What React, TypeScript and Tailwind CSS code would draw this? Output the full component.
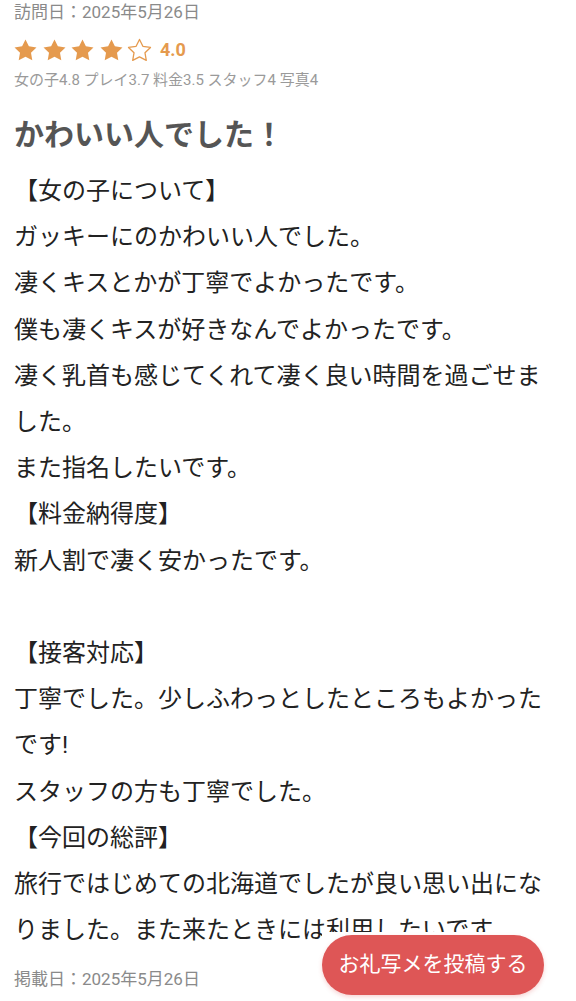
import React from "react";

const FONT = 'Roboto, "Noto Sans CJK JP", "Noto Sans", sans-serif';

function Star({ filled }: { filled: boolean }) {
  return (
    <svg width="25" height="25" viewBox="0 0 24 24" className="shrink-0">
      <path
        d="M12 1.4l3.25 6.6 7.3 1.05-5.28 5.15 1.25 7.27L12 18.05l-6.52 3.42 1.25-7.27-5.28-5.15 7.3-1.05L12 1.4z"
        fill={filled ? "#e59a4e" : "none"}
        stroke="#e59a4e"
        strokeWidth={filled ? 0 : 1.25}
        strokeLinejoin="round"
      />
    </svg>
  );
}

const body = `【女の子について】
ガッキーにのかわいい人でした。
凄くキスとかが丁寧でよかったです。
僕も凄くキスが好きなんでよかったです。
凄く乳首も感じてくれて凄く良い時間を過ごせました。
また指名したいです。
【料金納得度】
新人割で凄く安かったです。

【接客対応】
丁寧でした。少しふわっとしたところもよかったです!
スタッフの方も丁寧でした。
【今回の総評】
旅行ではじめての北海道でしたが良い思い出になりました。また来たときには利用したいです。`;

export default function App() {
  return (
    <div
      className="relative h-[1001px] w-full overflow-hidden bg-white"
      style={{ fontFamily: FONT }}
    >
      <div className="px-[14px]">
        <div className="text-[17px] leading-[24px] text-[#8a8a8a]">訪問日：2025年5月26日</div>
        <div className="mt-[13px] flex h-[26px] items-center">
          <div className="-ml-[1px] flex items-center gap-[3.5px]">
            <Star filled />
            <Star filled />
            <Star filled />
            <Star filled />
            <Star filled={false} />
          </div>
          <span className="ml-[8px] text-[18px] font-bold leading-none text-[#e59a4e]">4.0</span>
        </div>
        <div className="mt-[7px] text-[15px] leading-[20px] text-[#9a9a9a]">
          女の子4.8 プレイ3.7 料金3.5 スタッフ4 写真4
        </div>
        <h1 className="mt-[25px] text-[30px] font-bold leading-[40px] text-[#555555]">
          かわいい人でした！
        </h1>
        <p className="mt-[13px] whitespace-pre-wrap break-all text-[24px] leading-[46.2px] text-[#222222]">
          {body}
        </p>
        <div className="mt-[14px] text-[17px] leading-[24px] text-[#8a8a8a]">掲載日：2025年5月26日</div>
      </div>

      <div className="absolute left-[322px] top-[932px] h-[66px] w-[223px] bg-white">
        <button className="mt-[3px] flex h-[60px] w-[222px] items-center justify-center rounded-full bg-[#de5656] text-[21px] text-white shadow-[0_2px_4px_rgba(222,86,86,0.25)]">
          お礼写メを投稿する
        </button>
      </div>
    </div>
  );
}
